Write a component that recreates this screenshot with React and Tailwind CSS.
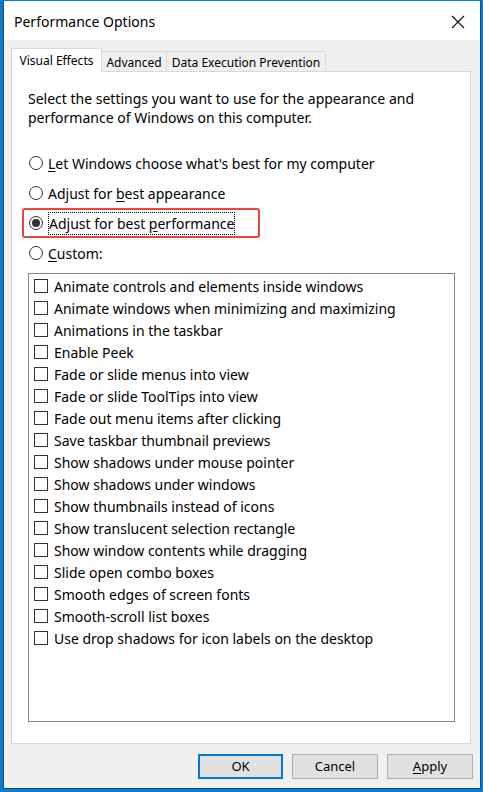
import React from "react";

const effects = [
  "Animate controls and elements inside windows",
  "Animate windows when minimizing and maximizing",
  "Animations in the taskbar",
  "Enable Peek",
  "Fade or slide menus into view",
  "Fade or slide ToolTips into view",
  "Fade out menu items after clicking",
  "Save taskbar thumbnail previews",
  "Show shadows under mouse pointer",
  "Show shadows under windows",
  "Show thumbnails instead of icons",
  "Show translucent selection rectangle",
  "Show window contents while dragging",
  "Slide open combo boxes",
  "Smooth edges of screen fonts",
  "Smooth-scroll list boxes",
  "Use drop shadows for icon labels on the desktop",
];

function Radio({ checked, children }) {
  return (
    <div className="flex items-center h-[30px]">
      <span className="ml-[1px] w-[14px] h-[14px] rounded-full border border-[#333] flex items-center justify-center bg-white">
        {checked && <span className="w-[8px] h-[8px] rounded-full bg-[#333]" />}
      </span>
      <span className="ml-[5px]">{children}</span>
    </div>
  );
}

export default function App() {
  return (
    <div
      className="w-[483px] h-[792px] bg-[#0a7bd1] pl-[3px] pt-[1px] pr-[2px] pb-[3px] text-black"
      style={{ fontFamily: '"Noto Sans", "Open Sans", sans-serif' }}
    >
      <div className="h-full flex flex-col bg-[#f0f0f0] border-l border-r border-b border-[#1a4a73]">
        {/* title bar */}
        <div className="h-[39px] bg-white flex items-center justify-between pl-[10px] pr-[15px]">
          <span className="text-[14px] leading-none mt-[2px]">Performance Options</span>
          <svg width="14" height="14" viewBox="0 0 14 14" className="mt-[2px]">
            <path d="M1 1 L13 13 M13 1 L1 13" stroke="#111" strokeWidth="1.1" />
          </svg>
        </div>

        {/* tabs */}
        <div className="flex items-end pl-[7px] pt-[8px] text-[12px] leading-none relative z-10">
          <div className="h-[24px] w-[91px] bg-white border border-b-0 border-[#d9d9d9] flex items-center justify-center -mb-px">
            Visual Effects
          </div>
          <div className="h-[20px] w-[65px] bg-[#f0f0f0] border border-l-0 border-b-0 border-[#d9d9d9] flex items-center justify-center pt-[2px]">
            Advanced
          </div>
          <div className="h-[20px] w-[159px] bg-[#f0f0f0] border border-l-0 border-b-0 border-[#d9d9d9] flex items-center justify-center pt-[2px]">
            Data Execution Prevention
          </div>
        </div>

        {/* panel */}
        <div className="ml-[7px] mr-[9px] h-[673px] bg-white border border-[#d9d9d9] pl-[16px] pr-[14px] pt-[17px] text-[14px] leading-[19px]">
          <p>
            Select the settings you want to use for the appearance and
            <br />
            performance of Windows on this computer.
          </p>

          <div className="mt-[21px]">
            <Radio>
              <span className="underline underline-offset-2">L</span>et Windows choose what's best for my computer
            </Radio>
            <Radio>
              Adjust for <span className="underline underline-offset-2">b</span>est appearance
            </Radio>
            <div className="relative">
              <div className="absolute left-[-6px] top-0 w-[238px] h-[30px] border-2 border-[#e8473b] rounded-[3px]" />
              <Radio checked>
                <span className="border border-dotted border-black py-[1px]">
                  Adjust for best <span className="underline underline-offset-2">p</span>erformance
                </span>
              </Radio>
            </div>
            <Radio>
              <span className="underline underline-offset-2">C</span>ustom:
            </Radio>
          </div>

          {/* list */}
          <div className="mt-[5px] w-[427px] h-[449px] border border-[#828790] pt-[1px] pl-[5px]">
            {effects.map((e) => (
              <div key={e} className="flex items-center h-[22px]">
                <span className="w-[14px] h-[14px] border border-[#333] bg-white shrink-0" />
                <span className="ml-[6px] whitespace-nowrap">{e}</span>
              </div>
            ))}
          </div>
        </div>

        {/* buttons */}
        <div className="flex justify-end gap-[9px] pr-[7px] pt-[10px] text-[13px] leading-none">
          <button className="w-[85px] h-[25px] bg-[#e1e1e1] border-2 border-[#0078d7]">OK</button>
          <button className="w-[86px] h-[25px] bg-[#e1e1e1] border border-[#adadad]">Cancel</button>
          <button className="w-[86px] h-[25px] bg-[#e1e1e1] border border-[#adadad]">
            <span className="underline underline-offset-2">A</span>pply
          </button>
        </div>
      </div>
    </div>
  );
}
